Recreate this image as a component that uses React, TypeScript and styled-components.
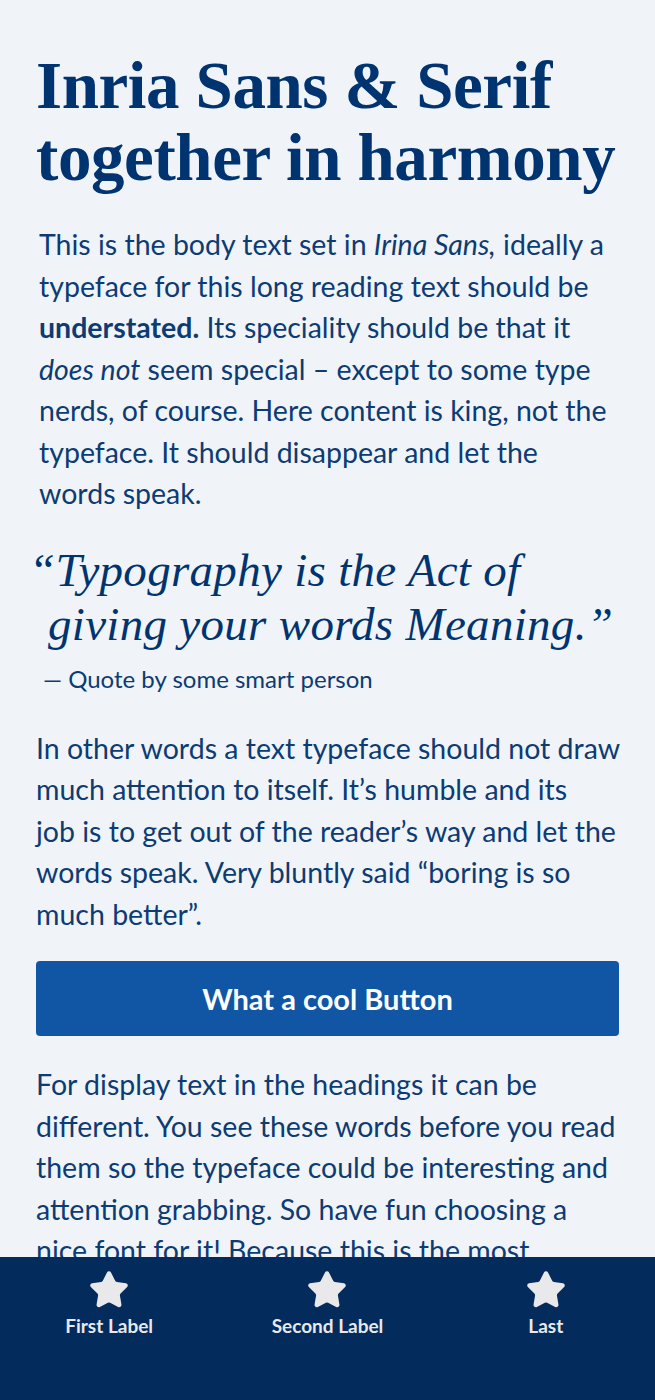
import React from 'react';
import styled, { createGlobalStyle } from 'styled-components';
import { Star } from 'lucide-react';

const GlobalStyle = createGlobalStyle`
  html, body {
    margin: 0;
    padding: 0;
    background: #f0f4f8;
  }
  * {
    box-sizing: border-box;
  }
`;

const Page = styled.main`
  padding: 49px 36px 150px;
  color: #0d3b73;
  font-family: Lato, 'Noto Sans', sans-serif;
`;

const Heading = styled.h1`
  margin: 0 0 31px;
  font-family: 'Liberation Serif', serif;
  font-weight: 700;
  font-size: 67px;
  line-height: 72px;
  letter-spacing: -0.4px;
  white-space: nowrap;
  color: #003470;
`;

const Paragraph = styled.p<{ $indent?: number }>`
  margin: 0 -16px 0 0;
  padding-left: ${(p) => p.$indent ?? 0}px;
  font-size: 28.5px;
  line-height: 41.5px;
`;

const Quote = styled.figure`
  margin: 28px 0 35px;
  padding-left: 12px;
`;

const QuoteText = styled.blockquote`
  margin: 0 0 14px;
  text-indent: -19px;
  font-family: 'Liberation Serif', serif;
  font-style: italic;
  font-size: 47px;
  line-height: 54px;
  letter-spacing: 0.3px;
  white-space: nowrap;
  color: #003470;
`;

const Attribution = styled.figcaption`
  margin-left: -5px;
  font-size: 24px;
  line-height: 28px;
`;

const Button = styled.button`
  display: block;
  width: 100%;
  height: 75px;
  margin: 26px 0 28px;
  border: none;
  border-radius: 4px;
  background: #1155a5;
  color: #fff;
  font-family: Lato, 'Noto Sans', sans-serif;
  font-size: 29px;
  font-weight: 700;
  cursor: pointer;
`;

const Nav = styled.nav`
  position: fixed;
  left: 0;
  right: 0;
  bottom: 0;
  height: 143px;
  display: grid;
  grid-template-columns: repeat(3, 1fr);
  align-items: start;
  padding-top: 12px;
  background: #032b5c;
`;

const NavItem = styled.a`
  display: flex;
  flex-direction: column;
  align-items: center;
  gap: 3px;
  color: #e9e9ec;
  text-decoration: none;
  font-family: Lato, 'Noto Sans', sans-serif;
  font-size: 19px;
  font-weight: 700;
  line-height: 24px;
`;

const navItems = ['First Label', 'Second Label', 'Last'];

export default function App() {
  return (
    <>
      <GlobalStyle />
      <Page>
        <Heading>
          Inria Sans &amp; Serif
          <br />
          together in harmony
        </Heading>
        <Paragraph $indent={3}>
          This is the body text set in <em>Irina Sans,</em> ideally a<br />
          typeface for this long reading text should be
          <br />
          <strong>understated.</strong> Its speciality should be that it
          <br />
          <em>does not</em> seem special – except to some type
          <br />
          nerds, of course. Here content is king, not the
          <br />
          typeface. It should disappear and let the
          <br />
          words speak.
        </Paragraph>
        <Quote>
          <QuoteText>
            “Typography is the Act of
            <br />
            giving your words Meaning.”
          </QuoteText>
          <Attribution>— Quote by some smart person</Attribution>
        </Quote>
        <Paragraph>
          In other words a text typeface should not draw
          <br />
          much attention to itself. It’s humble and its
          <br />
          job is to get out of the reader’s way and let the
          <br />
          words speak. Very bluntly said “boring is so
          <br />
          much better”.
        </Paragraph>
        <Button>What a cool Button</Button>
        <Paragraph>
          For display text in the headings it can be
          <br />
          different. You see these words before you read
          <br />
          them so the typeface could be interesting and
          <br />
          attention grabbing. So have fun choosing a
          <br />
          nice font for it! Because this is the most
        </Paragraph>
      </Page>
      <Nav>
        {navItems.map((label) => (
          <NavItem key={label} href="#">
            <Star size={42} fill="#e9e9ec" strokeWidth={1.5} />
            {label}
          </NavItem>
        ))}
      </Nav>
    </>
  );
}
